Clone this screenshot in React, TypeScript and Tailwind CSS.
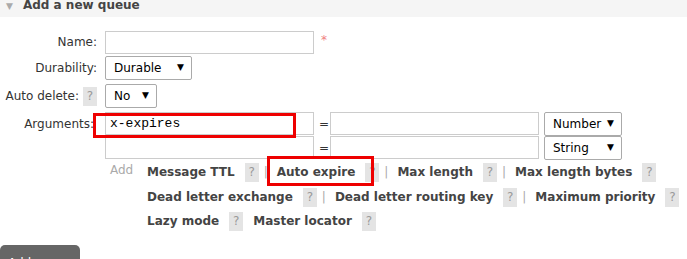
import React from 'react';

const Help = () => (
    <span className="inline-flex h-[19px] w-[14px] shrink-0 items-center justify-center bg-[#e4e4e4] text-[12px] text-[#999]">?</span>
);

const Sep = () => <span className="ml-[5px] mr-[9px] text-[12px] text-[#aaa]">|</span>;

const Link: React.FC<{ label: string; sep?: boolean }> = ({ label, sep = true }) => (
    <span className="inline-flex shrink-0 items-center whitespace-nowrap">
        <span className="mr-[10px] font-bold text-[#444]">{label}</span>
        <Help />
        {sep && <Sep />}
    </span>
);

const Select: React.FC<{ value: string; width: string }> = ({ value, width }) => (
    <div className={`flex h-[24px] items-center justify-between rounded-[2px] border border-[#aaa] bg-white pl-[8px] pr-[7px] text-[12px] text-black ${width}`}>
        <span>{value}</span>
        <span className="text-[9px]">▼</span>
    </div>
);

const TextInput: React.FC<{ width?: string; children?: React.ReactNode }> = ({ width = 'w-[209px]', children }) => (
    <div className={`flex h-[23px] items-center border border-[#ccc] bg-white px-[4px] ${width}`}>{children}</div>
);

export default function App() {
    return (
        <div className="relative h-[259px] w-[687px] overflow-hidden bg-white text-[12px] text-[#333]" style={{ fontFamily: '"DejaVu Sans", Verdana, sans-serif' }}>
            <div className="flex h-[17px] items-start bg-[#f5f5f5] pl-[6px]">
                <span className="mt-[1px] text-[9px] leading-[10px] text-[#aaa]">▼</span>
                <span className="ml-[10px] mt-[-2px] whitespace-nowrap text-[12px] font-bold leading-[14px] text-[#444]">Add a new queue</span>
            </div>

            <div className="mt-[14px] flex flex-col">
                <div className="flex h-[22px] items-center">
                    <div className="w-[98px] pr-[1px] text-right">Name:</div>
                    <div className="ml-[7px]"><TextInput /></div>
                    <span className="ml-[7px] mt-[-4px] text-[12px] text-[#f08080]">*</span>
                </div>
                <div className="mt-[3px] flex h-[24px] items-center">
                    <div className="w-[98px] pr-[1px] text-right">Durability:</div>
                    <div className="ml-[7px]"><Select value="Durable" width="w-[87px]" /></div>
                </div>
                <div className="mt-[4px] flex h-[24px] items-center">
                    <div className="flex w-[98px] items-center justify-end pr-[1px]">
                        <span className="mr-[4px] whitespace-nowrap">Auto delete:</span>
                        <Help />
                    </div>
                    <div className="ml-[7px]"><Select value="No" width="w-[52px]" /></div>
                </div>
                <div className="mt-[4px] flex h-[23px] items-center">
                    <div className="w-[98px] pr-[4px] text-right">Arguments:</div>
                    <div className="ml-[7px] flex items-center">
                        <TextInput>
                            <span className="text-[13px] text-black" style={{ fontFamily: '"Liberation Mono", monospace' }}>x-expires</span>
                        </TextInput>
                        <span className="ml-[5px] mr-[5px] w-[6px] text-[12px]">=</span>
                        <TextInput />
                        <div className="ml-[5px]"><Select value="Number" width="w-[78px]" /></div>
                    </div>
                </div>
                <div className="mt-[1px] flex h-[23px] items-center">
                    <div className="w-[98px]" />
                    <div className="ml-[7px] flex items-center">
                        <TextInput />
                        <span className="ml-[5px] mr-[5px] w-[6px] text-[12px]">=</span>
                        <TextInput />
                        <div className="ml-[5px]"><Select value="String" width="w-[78px]" /></div>
                    </div>
                </div>

                <div className="mt-[1px] flex">
                    <div className="ml-[110px] w-[37px] pt-[1px] text-[12px] text-[#aaa]">Add</div>
                    <div className="flex flex-col text-[12px]">
                        <div className="flex h-[24px] items-center">
                            <Link label="Message TTL" />
                            <Link label="Auto expire" />
                            <Link label="Max length" />
                            <Link label="Max length bytes" sep={false} />
                        </div>
                        <div className="mt-[1px] flex h-[24px] items-center">
                            <Link label="Dead letter exchange" />
                            <Link label="Dead letter routing key" />
                            <Link label="Maximum priority" sep={false} />
                        </div>
                        <div className="flex h-[24px] items-center">
                            <Link label="Lazy mode" sep={false} />
                            <span className="w-[10px]" />
                            <Link label="Master locator" sep={false} />
                        </div>
                    </div>
                </div>

                <div className="mt-[12px]">
                    <button className="h-[30px] w-[80px] rounded-[5px] bg-[#666] pl-[8px] pt-[5px] text-left align-top text-[12px] text-white">Add queue</button>
                </div>
            </div>

            <div className="pointer-events-none absolute left-[93px] top-[113px] h-[25px] w-[203px] border-[3px] border-[#e00]" />
            <div className="pointer-events-none absolute left-[267px] top-[156px] h-[30px] w-[107px] border-[3px] border-[#e00]" />
        </div>
    );
}
